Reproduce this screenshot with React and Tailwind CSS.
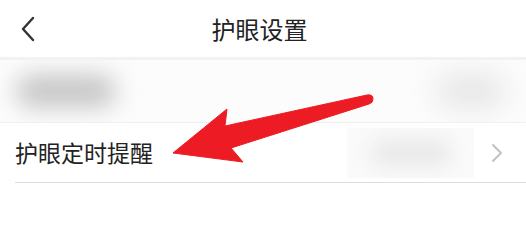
import React from "react";

const font = { fontFamily: '"Noto Sans CJK SC", "Noto Sans", sans-serif' };

const BackIcon = () => (
  <svg width="20" height="30" viewBox="0 0 20 30" fill="none">
    <path d="M14 4 L4 15 L14 26" stroke="#333" strokeWidth="2.4" strokeLinecap="round" strokeLinejoin="round" />
  </svg>
);

const ChevronRight = () => (
  <svg width="14" height="20" viewBox="0 0 14 20" fill="none">
    <path d="M3 2 L11 10 L3 18" stroke="#c2c2c2" strokeWidth="2" strokeLinecap="round" strokeLinejoin="round" />
  </svg>
);

// red annotation arrow laid over the list
const Arrow = () => (
  <svg className="pointer-events-none absolute left-0 top-0" width="526" height="233" viewBox="0 0 526 233">
    <path
      d="M173 153 L227 109 L225 126 L367 95 Q373 94 373 99 Q373 103 369 104 L231 148 L243 162 Z"
      fill="#ed1c24"
      stroke="#ed1c24"
      strokeWidth="1"
      strokeLinejoin="round"
    />
  </svg>
);

export default function App() {
  return (
    <div className="relative w-[526px] h-[233px] overflow-hidden bg-white" style={font}>
      {/* header */}
      <div className="grid grid-cols-[1fr_auto_1fr] items-center h-[57px] pl-[19px] pr-[14px]">
        <div className="flex items-center">
          <BackIcon />
        </div>
        <div className="mr-[12px] text-[24px] leading-none text-[#222]">护眼设置</div>
        <div />
      </div>
      <div className="h-[3px] bg-[#f2f2f2]" />

      {/* blurred row */}
      <div className="relative flex items-center justify-between h-[63px] overflow-hidden bg-[#fcfcfc] border-b border-[#f0f0f0]">
        <div className="ml-[16px] w-[100px] h-[32px] rounded-full bg-[#c4c4c4] blur-[12px]" />
        <div className="mr-[20px] w-[70px] h-[34px] rounded-full bg-[#e6e6e6] blur-[14px]" />
      </div>

      {/* reminder row */}
      <div className="flex items-center h-[59px] pl-[15px] pr-[22px]">
        <div className="text-[23px] leading-none text-[#222]">护眼定时提醒</div>
        <div className="flex-1" />
        <div className="flex items-center justify-center w-[127px] h-[50px] bg-[#fafafa] mr-[16px] overflow-hidden">
          <div className="w-[80px] h-[26px] rounded-full bg-[#e8e8e8] blur-[10px]" />
        </div>
        <ChevronRight />
      </div>
      <div className="ml-[15px] h-[1px] bg-[#dedede]" />

      <Arrow />
    </div>
  );
}
